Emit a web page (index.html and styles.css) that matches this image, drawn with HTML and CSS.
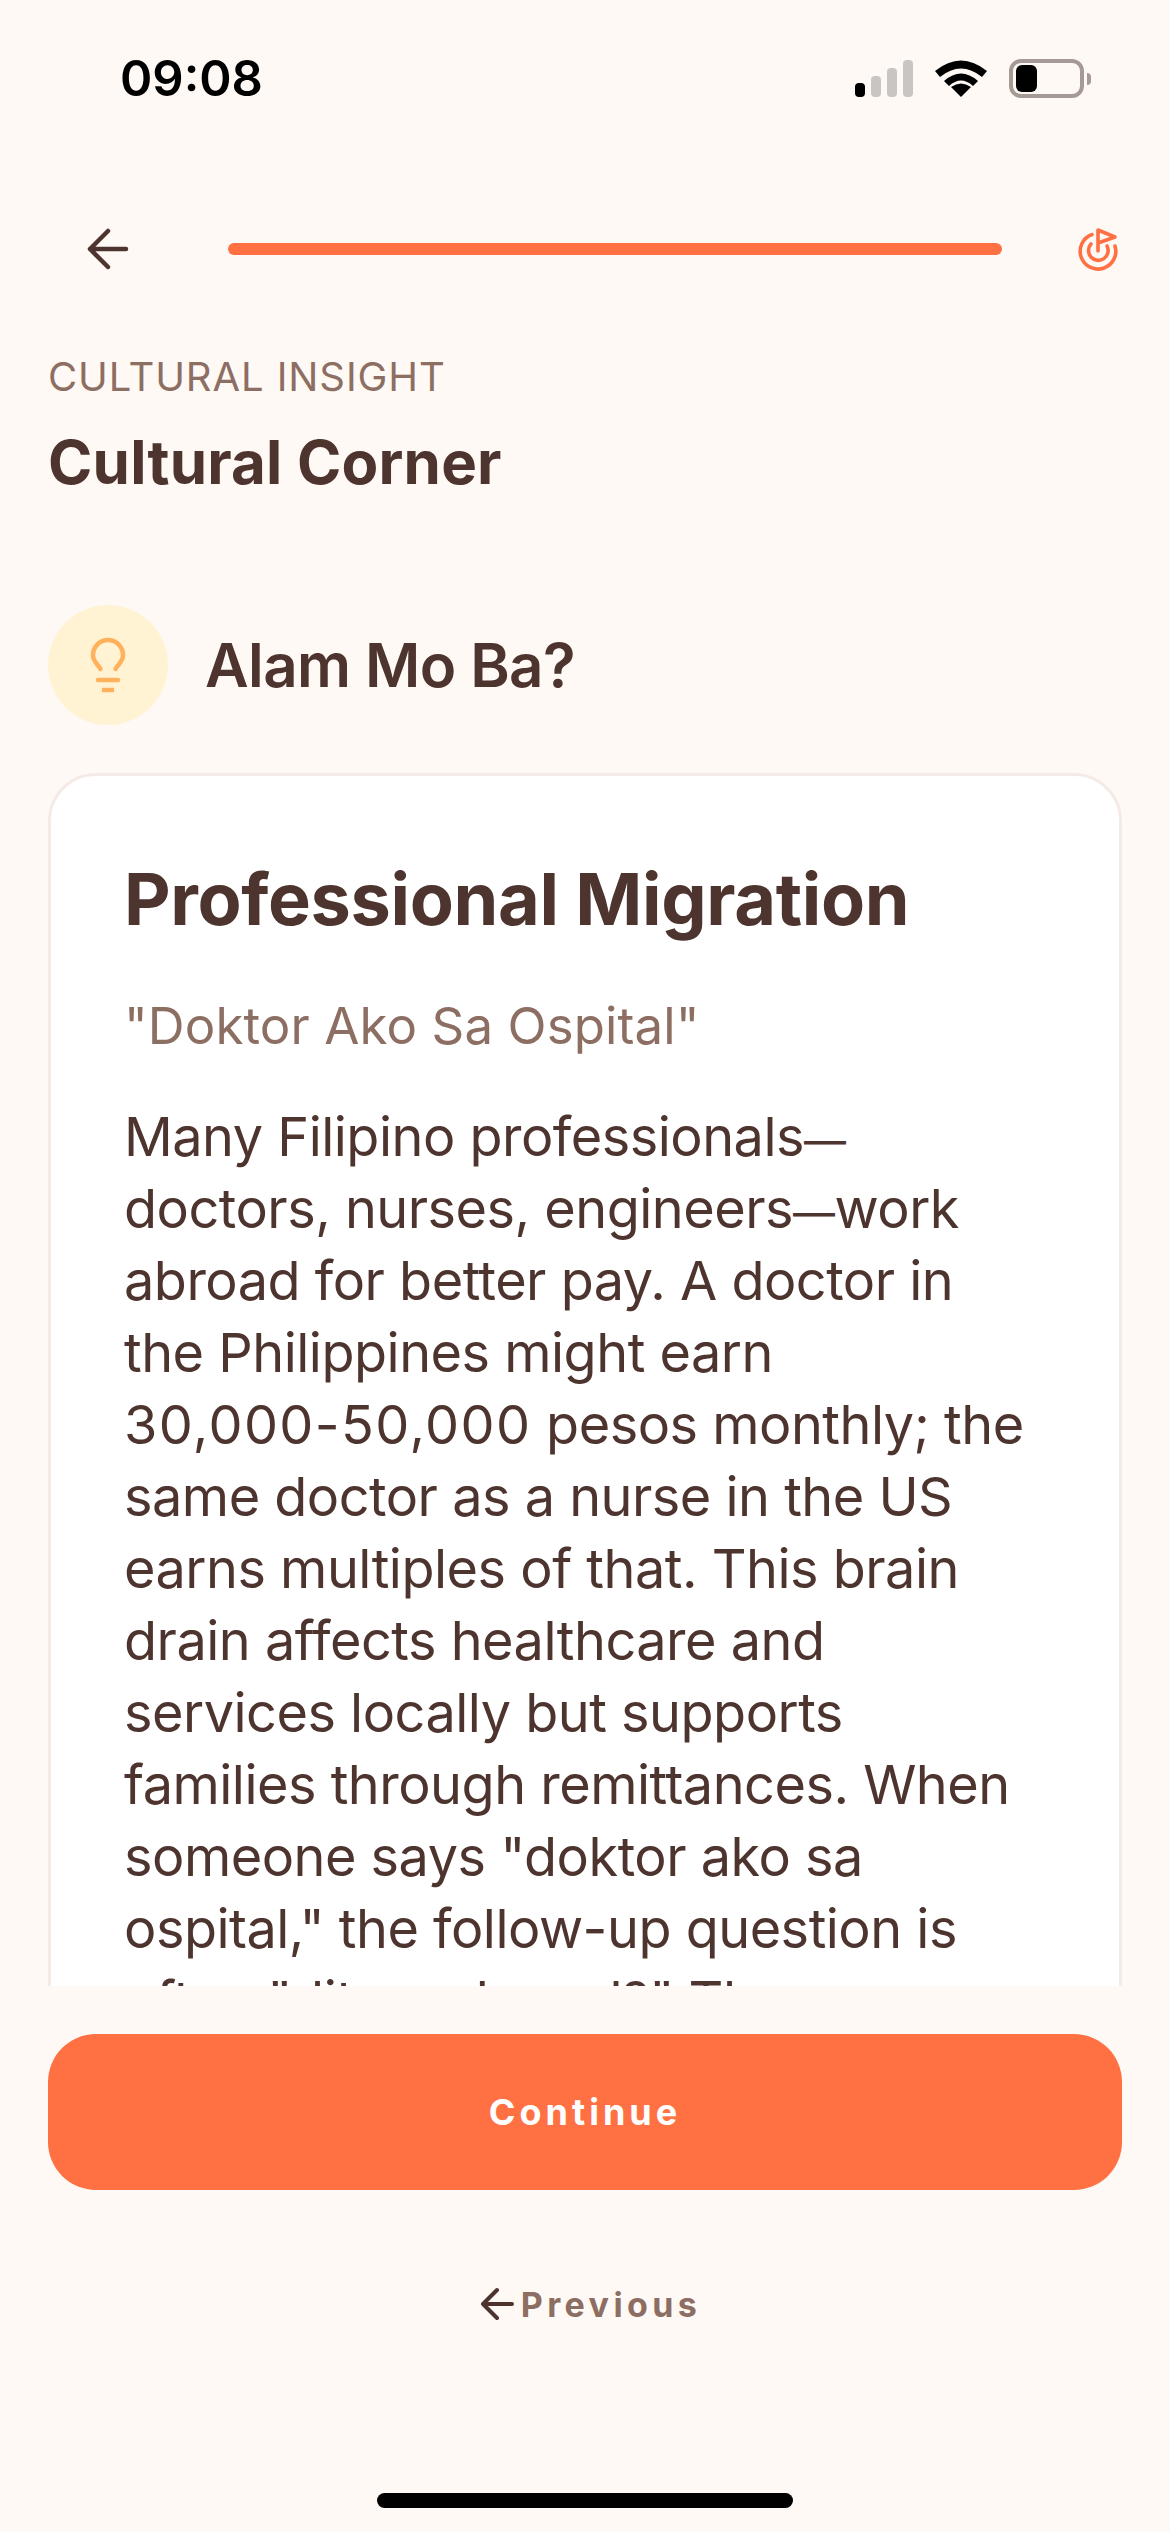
FILE: index.html
```html
<!DOCTYPE html>
<html lang="en">
<head>
<meta charset="utf-8">
<title>Cultural Corner</title>
<link rel="stylesheet" href="styles.css">
</head>
<body>
<div class="screen">
  <div class="statusbar">
    <span class="time">09:08</span>
    <div class="status-icons">
      <svg class="signal" width="58" height="38" viewBox="0 0 58 38">
        <rect x="0" y="23" width="10" height="14" rx="4" fill="#000"/>
        <rect x="16" y="16" width="10" height="21" rx="4" fill="#c9c5c2"/>
        <rect x="32" y="8" width="10" height="29" rx="4" fill="#c9c5c2"/>
        <rect x="48" y="0" width="10" height="37" rx="4" fill="#c9c5c2"/>
      </svg>
      <svg class="wifi" width="52" height="38" viewBox="0 0 52 38">
        <path d="M26 37 L16 27 Q26 20 36 27 Z" fill="#000"/>
        <path d="M9 21 Q26 6 43 21 L38 26 Q26 15 14 26 Z" fill="#000"/>
        <path d="M0 11 Q26 -10 52 11 L47 17 Q26 0 5 17 Z" fill="#000"/>
      </svg>
      <div class="battery">
        <div class="battery-body"><div class="battery-fill"></div></div>
        <div class="battery-cap"></div>
      </div>
    </div>
  </div>
  <div class="topbar">
    <svg class="back" width="48" height="48" viewBox="0 0 48 48" fill="none" stroke="#4e342e" stroke-width="4.5" stroke-linecap="round" stroke-linejoin="round">
      <path d="M43 24 H7 M25 6 L7 24 L25 42"/>
    </svg>
    <div class="progress"></div>
    <svg class="goal" width="44" height="46" viewBox="0 0 44 46" fill="none" stroke="#ff7043" stroke-width="3.6" stroke-linecap="round" stroke-linejoin="round">
      <path d="M15 8.5 A17.8 17.8 0 1 0 38 20"/>
      <path d="M14 18 A9.8 9.8 0 1 0 30 20"/>
      <path d="M21 25 V4 L38 11 L21 17"/>
    </svg>
  </div>
  <div class="heading">
    <div class="eyebrow">CULTURAL INSIGHT</div>
    <h1 class="title">Cultural Corner</h1>
  </div>
  <div class="content">
    <div class="section-row">
      <div class="bulb-circle">
        <svg width="40" height="58" viewBox="0 0 40 58" fill="none" stroke="#ffb15c" stroke-width="4.5" stroke-linecap="round">
          <path d="M12.5 33 C10 28 5 26 5 19 A15 15 0 0 1 35 19 C35 26 30 28 27.5 33"/>
          <path d="M10 44 H30"/>
          <path d="M14 54 H26" stroke-linecap="butt"/>
        </svg>
      </div>
      <h2 class="section-title">Alam Mo Ba?</h2>
    </div>
    <div class="card">
      <h3 class="card-title">Professional Migration</h3>
      <p class="quote">"Doktor Ako Sa Ospital"</p>
      <p class="body-text">Many Filipino professionals<span class="dash">—</span><br>doctors, nurses, engineers<span class="dash">—</span>work<br>abroad for better pay. A doctor in<br>the Philippines might earn<br><span class="digits">30,000-50,000</span> pesos monthly; the<br>same doctor as a nurse in the US<br>earns multiples of that. This brain<br>drain affects healthcare and<br>services locally but supports<br>families through remittances. When<br>someone says "doktor ako sa<br>ospital," the follow-up question is<br>often "dito o abroad?" The</p>
    </div>
  </div>
  <div class="actions">
    <button class="continue">Continue</button>
    <div class="previous">
      <svg width="36" height="36" viewBox="0 0 36 36" fill="none" stroke="#4e342e" stroke-width="4" stroke-linecap="round" stroke-linejoin="round">
        <path d="M33 18 H4 M18 4 L4 18 L18 32"/>
      </svg>
      <span>Previous</span>
    </div>
  </div>
  <div class="home-area"><div class="home-indicator"></div></div>
</div>
</body>
</html>
```
FILE: styles.css
```css
* { box-sizing: border-box; }
html, body { margin: 0; padding: 0; }
body { background: #fff9f5; font-family: "Inter", "Noto Sans", sans-serif; color: #4e342e; }
.screen { width: 1170px; height: 2532px; display: flex; flex-direction: column; overflow: hidden; }
.statusbar { height: 156px; flex: none; display: flex; justify-content: space-between; align-items: flex-start; padding: 50px 79px 0 120px; }
.time { font-size: 49px; font-weight: 600; color: #000; line-height: 58px; letter-spacing: 0; }
.status-icons { display: flex; align-items: center; gap: 22px; padding-top: 9px; }
.battery { display: flex; align-items: center; gap: 3px; }
.battery-body { width: 75px; height: 39px; border: 4px solid #a59a96; border-radius: 12px; padding: 2px 3px; }
.battery-fill { width: 21px; height: 27px; background: #000; border-radius: 6px; }
.battery-cap { width: 4px; height: 12px; background: #a59a96; border-radius: 0 6px 6px 0; }
.topbar { height: 186px; flex: none; padding: 0 48px 0 83px; display: flex; align-items: flex-start; }
.back { flex: none; margin-top: 69px; margin-right: 97px; }
.progress { flex: none; width: 774px; height: 12px; margin-top: 87px; background: #ff7043; border-radius: 6px; }
.goal { flex: none; margin-top: 70px; margin-left: 75px; }
.heading { padding: 0 48px; flex: none; }
.eyebrow { font-size: 40px; line-height: 48px; color: #8d6e63; letter-spacing: 0.9px; margin-top: 11px; }
.title { margin: 26px 0 0; font-size: 60px; line-height: 70px; font-weight: 700; color: #4e342e; letter-spacing: 0.2px; }
.content { flex: 1; min-height: 0; overflow: hidden; padding: 0 48px; margin-top: 108px; }
.section-row { display: flex; align-items: center; gap: 37px; }
.bulb-circle { width: 120px; height: 120px; border-radius: 50%; background: #fff3d4; display: flex; align-items: center; justify-content: center; flex: none; }
.section-title { margin: 0; font-size: 60px; font-weight: 600; letter-spacing: -0.6px; line-height: 70px; }
.card { margin-top: 48px; background: #fff; border: 3px solid #f5ebe6; border-radius: 48px; padding: 79px 73px; }
.card-title { margin: 0; font-size: 72px; line-height: 88px; font-weight: 700; letter-spacing: -0.35px; }
.quote { margin: 47px 0 0; font-size: 51px; line-height: 72px; color: #8d6e63; letter-spacing: 0.1px; }
.body-text { margin: 39px 0 0; font-size: 54px; line-height: 72px; color: #4e342e; white-space: nowrap; letter-spacing: -0.5px; }
.dash { font-size: 42px; line-height: 0; }
.digits { letter-spacing: 1.4px; }
.actions { flex: none; padding: 48px 48px 0; display: flex; flex-direction: column; align-items: center; }
.continue { width: 100%; height: 156px; border: 0; border-radius: 48px; background: #ff7043; color: #fff; font-family: inherit; font-size: 36px; font-weight: 700; letter-spacing: 4px; }
.previous { height: 84px; margin-top: 72px; padding-left: 10px; display: flex; align-items: center; gap: 6px; color: #8d6e63; font-size: 34px; font-weight: 700; letter-spacing: 4.4px; }
.home-area { flex: none; height: 186px; display: flex; justify-content: center; padding-top: 147px; }
.home-indicator { width: 416px; height: 15px; background: #000; border-radius: 8px; }
```
